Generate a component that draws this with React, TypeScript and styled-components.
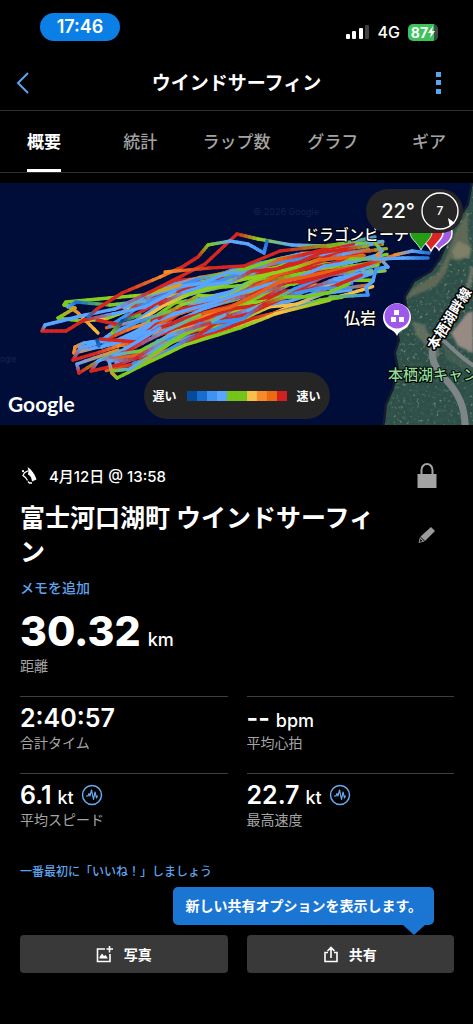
import React from "react";
import styled, { createGlobalStyle } from "styled-components";

const latin = `Inter, "Noto Sans CJK JP", sans-serif`;

const GlobalStyle = createGlobalStyle`
  *, *::before, *::after { box-sizing: border-box; }
  html, body { margin: 0; background: #000; }
  body { color: #fff; font-family: ${latin}; -webkit-font-smoothing: antialiased; }
  button { font: inherit; color: inherit; background: none; border: 0; padding: 0; cursor: pointer; }
  h1, h2, p, dl, dd, dt { margin: 0; }
  svg { display: block; flex: none; }
`;

const Page = styled.div`
  min-height: 100vh;
  background: #000;
`;

const StatusBar = styled.div`
  display: flex;
  justify-content: space-between;
  align-items: flex-start;
  height: 56px;
  padding: 13px 35px 0 40px;
`;

const Clock = styled.span`
  width: 80px;
  height: 28px;
  border-radius: 14px;
  background: #0a7fe6;
  font-size: 18px;
  font-weight: 600;
  line-height: 28px;
  text-align: center;
`;

const StatusIcons = styled.div`
  display: flex;
  align-items: center;
  gap: 8px;
  height: 18px;
  margin-top: 10px;
  font-size: 16px;
  font-weight: 500;
`;

const Battery = styled.span`
  display: flex;
  align-items: center;
  justify-content: center;
  width: 30px;
  height: 17px;
  border-radius: 5px;
  background: linear-gradient(90deg, #3cc35c 88%, #3c4a40 88%);
  font-size: 14px;
  font-weight: 700;
`;

const Header = styled.header`
  display: grid;
  grid-template-columns: 1fr auto 1fr;
  align-items: center;
  height: 55px;
  padding: 0 16px;
  border-bottom: 1px solid #303030;
`;

const HeaderTitle = styled.h1`
  padding-top: 2px;
  font-size: 19px;
  font-weight: 700;
  line-height: 28px;
`;

const IconButton = styled.button<{ $end?: boolean }>`
  display: flex;
  align-items: center;
  justify-content: center;
  justify-self: ${(p) => (p.$end ? "end" : "start")};
  width: 14px;
  height: 28px;
  margin-right: ${(p) => (p.$end ? 12 : 0)}px;
`;

const Tabs = styled.nav`
  overflow: hidden;
  border-bottom: 1px solid #303030;
`;

const TabList = styled.div`
  display: grid;
  grid-template-columns: repeat(5, 1fr);
  justify-items: center;
  margin: 0 -4px;
`;

const Tab = styled.button<{ $active?: boolean }>`
  height: 61px;
  border-bottom: 3px solid ${(p) => (p.$active ? "#fff" : "transparent")};
  color: ${(p) => (p.$active ? "#fff" : "#a3a3a3")};
  font-size: 17px;
  font-weight: ${(p) => (p.$active ? 700 : 500)};
  white-space: nowrap;
`;

const MapPanel = styled.section`
  position: relative;
  height: 242px;
  margin-top: 10px;
  overflow: hidden;
  background: #000d38;
`;

const MapDrawing = styled.svg`
  width: 100%;
  height: 100%;
`;

const Weather = styled.div`
  position: absolute;
  top: 6px;
  right: 10px;
  display: flex;
  align-items: center;
  gap: 5px;
  height: 44px;
  padding: 0 3px 0 15px;
  border-radius: 22px;
  background: #252525;
  font-size: 20px;
  font-weight: 500;
`;

const Legend = styled.div`
  position: absolute;
  left: 50%;
  bottom: 6px;
  transform: translateX(-50%);
  display: flex;
  align-items: center;
  gap: 10px;
  height: 47px;
  padding: 0 9px;
  border-radius: 24px;
  background: #252525;
  font-size: 12px;
  font-weight: 600;
  white-space: nowrap;
`;

const Scale = styled.div`
  display: flex;
`;

const Swatch = styled.span<{ $color: string }>`
  width: 10px;
  height: 10px;
  background: ${(p) => p.$color};
`;

const MapLogo = styled.span`
  position: absolute;
  left: 8px;
  bottom: 7px;
  font-family: Lato, sans-serif;
  font-size: 21px;
  font-weight: 700;
  line-height: 28px;
`;

const Details = styled.main`
  padding: 36px 19px 50px 20px;
`;

const MetaRow = styled.div`
  display: flex;
  align-items: center;
  justify-content: space-between;
  height: 28px;
  padding-right: 17px;
`;

const MetaDate = styled.div`
  display: flex;
  align-items: center;
  gap: 11px;
  font-size: 15px;
  font-weight: 500;
`;

const TitleRow = styled.div`
  display: flex;
  align-items: center;
  justify-content: space-between;
  margin-top: 12px;
  padding-right: 20px;
`;

const ActivityTitle = styled.h2`
  max-width: 360px;
  font-size: 25px;
  font-weight: 700;
  line-height: 34px;
  word-break: break-all;
`;

const TextLink = styled.a<{ $small?: boolean }>`
  display: block;
  width: max-content;
  color: #5fa3ec;
  font-size: ${(p) => (p.$small ? 12 : 14)}px;
  font-weight: 500;
  line-height: 20px;
  text-decoration: none;
`;

const Memo = styled.div`
  margin-top: 9px;
`;

const Primary = styled.dl`
  display: flex;
  flex-direction: column;
  margin-top: 8px;
  margin-bottom: 20px;
`;

const StatGrid = styled.dl`
  display: grid;
  grid-template-columns: 1fr 1fr;
  column-gap: 19px;
`;

const Stat = styled.div`
  display: flex;
  flex-direction: column;
  height: 77px;
  padding-top: 6px;
  border-top: 1px solid #3e3e3e;
`;

const Value = styled.dd<{ $large?: boolean }>`
  display: flex;
  align-items: baseline;
  gap: ${(p) => (p.$large ? 7 : 6)}px;
  height: ${(p) => (p.$large ? 50 : 30)}px;
  font-family: Inter, sans-serif;
  font-size: ${(p) => (p.$large ? 41 : 25)}px;
  font-weight: ${(p) => (p.$large ? 800 : 600)};
  line-height: ${(p) => (p.$large ? 50 : 30)}px;
`;

const Unit = styled.span`
  font-size: 18px;
  font-weight: 500;
  line-height: 20px;
`;

const PulseBox = styled.span`
  align-self: center;
  margin-left: 1px;
`;

const Label = styled.dt`
  order: 1;
  color: #a5a5a5;
  font-size: 14px;
  line-height: 20px;
`;

const LikeRow = styled.div`
  margin-top: 12px;
`;

const Actions = styled.div`
  position: relative;
  display: grid;
  grid-template-columns: 1fr 1fr;
  gap: 19px;
  margin-top: 53px;
`;

const ActionButton = styled.button`
  display: flex;
  align-items: center;
  justify-content: center;
  gap: 11px;
  height: 38px;
  border-radius: 4px;
  background: #393939;
  font-size: 14px;
  font-weight: 600;
`;

const Tooltip = styled.div`
  position: absolute;
  right: 20px;
  bottom: 48px;
  height: 38px;
  padding: 0 12px;
  border-radius: 5px;
  background: #1a76d2;
  font-size: 14px;
  font-weight: 600;
  line-height: 38px;
  white-space: nowrap;
  &::after {
    content: "";
    position: absolute;
    top: 100%;
    right: 9px;
    border: 11px solid transparent;
    border-top: 10px solid #1a76d2;
    border-bottom: 0;
  }
`;

/* ---------- speed track ---------- */

type Pt = [number, number];
type Seg = { a: Pt; b: Pt; c: string };
const speed = ["#0b4aa0", "#1b6fd0", "#3f92f5", "#5aa5ff", "#7ccb1c", "#8ecf20", "#f4c043", "#f58a2a", "#ea5f16", "#d5261f"];

const edge = (pts: Pt[], x: number) => {
  for (let i = 1; i < pts.length; i++) {
    if (x <= pts[i][0]) {
      const [ax, ay] = pts[i - 1];
      const [bx, by] = pts[i];
      return ay + ((by - ay) * (x - ax)) / (bx - ax);
    }
  }
  return pts[pts.length - 1][1];
};

const topEdge: Pt[] = [[40, 140], [64, 123], [120, 113], [165, 92], [200, 87], [240, 82], [290, 73], [340, 62], [390, 58]];
const bottomEdge: Pt[] = [[40, 160], [75, 190], [116, 190], [150, 178], [185, 161], [240, 144], [280, 128], [330, 117], [390, 104]];

const mix = (a: string, b: string, t: number) => {
  const n = (s: string, i: number) => parseInt(s.slice(i, i + 2), 16);
  return `rgb(${[1, 3, 5].map((i) => Math.round(n(a, i) + (n(b, i) - n(a, i)) * t)).join(",")})`;
};

const segments = (pts: Pt[], cols: number[]) => {
  const out: Seg[] = [];
  for (let i = 1; i < pts.length; i++) {
    const [ax, ay] = pts[i - 1];
    const [bx, by] = pts[i];
    for (let k = 0; k < 5; k++) {
      const p = k / 5;
      const q = (k + 1) / 5;
      out.push({
        a: [ax + (bx - ax) * p, ay + (by - ay) * p],
        b: [ax + (bx - ax) * q, ay + (by - ay) * q],
        c: mix(speed[cols[i - 1]], speed[cols[i]], p),
      });
    }
  }
  return out;
};

const buildPasses = () => {
  let seed = 4211;
  const rnd = () => {
    seed = (seed * 16807) % 2147483647;
    return seed / 2147483647;
  };
  const picks = [9, 9, 9, 9, 9, 9, 3, 3, 3, 2, 4, 5, 4, 7, 6, 8];
  const all: Seg[] = [];
  for (let i = 0; i < 46; i++) {
    const base = ((i * 19) % 46) / 45;
    const v0 = Math.min(1, base * 0.9 + 0.15);
    const v1 = Math.max(0, Math.min(1, base + (rnd() - 0.7) * 0.8));
    const start = 100 + rnd() * 60;
    const end = 350 + rnd() * 38 - Math.max(0, v1 - 0.7) * 50;
    const pts: Pt[] = [];
    const cols: number[] = [];
    let c = picks[Math.floor(rnd() * picks.length)];
    for (let j = 0; j <= 9; j++) {
      const t = j / 9;
      const x = start + (end - start) * t;
      const v = Math.min(1, Math.max(0, v0 + (v1 - v0) * t + (rnd() - 0.5) * 0.14));
      pts.push([x, edge(topEdge, x) * (1 - v) + edge(bottomEdge, x) * v]);
      if (rnd() < 0.4) c = picks[Math.floor(rnd() * picks.length)];
      cols.push(c);
    }
    all.push(...segments(pts, cols));
  }
  return all;
};

const outer = [
  ...segments([[120, 162], [98, 158], [84, 160], [75, 164], [74, 170], [94, 165], [118, 160], [150, 148]], [2, 3, 3, 7, 7, 3, 3, 3]),
  ...segments([[73, 177], [80, 165], [98, 160], [112, 150], [140, 138], [170, 128]], [9, 3, 3, 3, 2, 4]),
  ...segments([[73, 177], [94, 171], [118, 163], [137, 159], [100, 156]], [9, 9, 7, 9, 9]),
  ...segments([[118, 167], [77, 181], [79, 190], [100, 177], [125, 166], [160, 145]], [7, 3, 9, 4, 3, 3]),
  ...segments([[91, 188], [98, 178], [128, 168], [165, 148], [200, 132]], [9, 3, 9, 3, 4]),
  ...segments([[91, 188], [118, 182], [148, 170], [190, 148]], [9, 9, 3, 4]),
  ...segments([[109, 178], [135, 176], [160, 160]], [3, 9, 3]),
  ...segments([[109, 178], [112, 190], [117, 195], [145, 181], [185, 162], [240, 145], [275, 131], [330, 117]], [3, 7, 4, 4, 5, 4, 6, 4]),
  ...segments([[112, 188], [130, 186], [155, 170], [184, 152], [225, 132]], [4, 3, 4, 4, 3]),
  ...segments([[114, 172], [140, 168], [170, 152], [210, 140]], [3, 4, 3, 9]),
  ...segments([[104, 136], [81, 138], [58, 135], [75, 125], [64, 122], [66, 119], [120, 114], [145, 112], [180, 102]], [6, 4, 4, 7, 4, 4, 5, 5, 7]),
  ...segments([[66, 121], [78, 130], [98, 150]], [4, 7, 6]),
  ...segments([[68, 124], [76, 119], [110, 122], [145, 118]], [3, 1, 4, 3]),
  ...segments([[97, 137], [120, 142], [112, 150], [122, 138], [140, 132]], [9, 9, 4, 0, 4]),
  ...segments([[42, 148], [66, 148], [84, 137], [113, 131], [145, 124], [175, 108]], [9, 9, 9, 3, 3, 3]),
  ...segments([[97, 157], [99, 163]], [0, 1]),
  ...segments([[42, 148], [45, 142], [85, 132], [115, 126], [150, 109], [205, 81], [237, 51], [258, 56], [292, 62], [330, 63], [375, 54]], [9, 3, 3, 3, 9, 9, 9, 5, 3, 4, 2]),
  ...segments([[88, 134], [97, 126], [122, 110], [160, 94], [182, 84], [198, 74], [208, 62], [230, 58], [248, 61], [264, 70], [267, 58]], [1, 9, 9, 7, 9, 9, 4, 3, 3, 2, 1]),
  ...segments([[165, 89], [210, 85], [244, 83], [280, 68], [340, 61]], [7, 9, 9, 9, 4]),
  ...segments([[375, 60], [382, 68], [377, 72], [388, 84], [376, 86], [373, 98], [366, 104], [368, 112], [330, 114]], [4, 3, 7, 3, 2, 3, 3, 2, 4]),
  ...segments([[300, 100], [335, 90], [365, 82], [395, 72], [412, 68], [429, 70]], [9, 9, 9, 7, 3, 1]),
  ...segments([[350, 76], [380, 76], [403, 75], [428, 75]], [4, 3, 3, 1]),
];

const track = [...buildPasses(), ...outer];

const Track = () => (
  <g strokeWidth="3.4" strokeLinecap="round">
    {track.map((s, i) => (
      <line key={i} x1={s.a[0]} y1={s.a[1]} x2={s.b[0]} y2={s.b[1]} stroke={s.c} />
    ))}
  </g>
);

const shore = "M473 0 L469 22 L453 45 L447 62 L441 76 L432 89 L415 99 L406 114 L408 128 L398 142 L400 158 L396 170 L399 186 L394 206 L387 222 L385 242 L473 242 Z";

const MapView = () => (
  <MapDrawing viewBox="0 0 473 242" preserveAspectRatio="xMaxYMid slice" role="img" aria-label="ルートマップ">
    <defs>
      <filter id="trees" x="0" y="0" width="100%" height="100%">
        <feTurbulence type="fractalNoise" baseFrequency="0.2" numOctaves="3" seed="6" />
        <feColorMatrix values="0 0 0 0 0.03  0 0 0 0 0.09  0 0 0 0 0.08  5 0 0 0 -2.2" />
        <feComposite in2="SourceGraphic" operator="in" />
      </filter>
      <filter id="leaves" x="0" y="0" width="100%" height="100%">
        <feTurbulence type="fractalNoise" baseFrequency="0.3" numOctaves="2" seed="21" />
        <feColorMatrix values="0 0 0 0 0.42  0 0 0 0 0.55  0 0 0 0 0.47  0 4 0 0 -2.3" />
        <feComposite in2="SourceGraphic" operator="in" />
      </filter>
      <filter id="soft"><feGaussianBlur stdDeviation="1.2" /></filter>
      <clipPath id="land"><path d={shore} /></clipPath>
    </defs>
    <rect width="473" height="242" fill="#000d38" />
    <path d={shore} fill="#141a30" stroke="#141a30" strokeWidth="5" />
    <path d={shore} fill="#2f4f46" />
    <g clipPath="url(#land)">
      <path d={shore} fill="#fff" filter="url(#leaves)" opacity=".5" />
      <path d={shore} fill="#fff" filter="url(#trees)" opacity=".75" />
      <g filter="url(#soft)">
        <path d="M468 28 L455 50 L447 72 L438 90 L412 106 L406 116 L418 111 L436 103 L446 90 L450 76 L460 78 L471 70 L468 52Z" fill="#686d58" opacity=".85" />
        <path d="M458 58 L471 64 L470 74 L455 76 L452 68Z" fill="#85876b" opacity=".8" />
        <path d="M412 138 L425 142 L428 150 L436 156 L440 170 L434 180 L428 165 L416 152Z" fill="#6c7565" opacity=".8" />
        <path d="M442 160 L456 172 L473 182 L473 192 L446 176Z" fill="#4e6658" opacity=".6" />
        <path d="M473 84 L468 105 L458 122" stroke="#807f76" strokeWidth="4" fill="none" opacity=".8" />
        <path d="M473 128 L467 130 L458 142 L451 150 L458 163 L473 170Z" fill="#9c8d86" opacity=".95" />
      </g>
      <g fill="none" stroke="#7e8587">
        <path d="M433 166 C430 178 438 188 447 198 C460 212 465 226 465 242" strokeWidth="7" />
        <path d="M443 157 C453 166 462 176 476 184" strokeWidth="4" />
      </g>
    </g>
    <text x="253" y="32" fill="#14224c" fontSize="9" fontFamily="Inter">© 2026 Google</text>
    <text x="0" y="179" fill="#17274e" fontSize="8" fontFamily="Inter">ogle</text>
    <Track />
    <g stroke="#fff" strokeWidth="1.5">
      <path d="M439 67 C437 63 434 63 431 60 A13 13 0 1 1 447 60 C444 63 441 63 439 67Z" fill="#a35be5" />
      <path d="M431 68 C427 60 420 57 420 50 A11 11 0 0 1 443 50 C443 57 435 60 431 68Z" fill="#d92525" />
      <path d="M421 67 C417 59 410 56 410 49 A11 11 0 0 1 432 49 C432 56 425 59 421 67Z" fill="#259b16" strokeWidth="0.8" />
    </g>
    <g transform="translate(397 134)">
      <path d="M0 19 C-2 14 -6 13 -9 11 A14 14 0 1 1 9 11 C6 13 2 14 0 19Z" fill="#fff" />
      <circle r="12.5" cy="-1" fill="#9e59ec" />
      <path d="M-3 -7h5v5h-5z M-6 0h5v5h-5z M2 0h5v5H2z" fill="#fff" />
    </g>
    <g fontFamily="Noto Sans CJK JP" fontWeight="500" fontSize="15" stroke="#000" strokeWidth="2" paintOrder="stroke" strokeLinejoin="round">
      <text x="304" y="57" fill="#fff">ドラゴンビーチ</text>
      <text x="344" y="141" fill="#fff" fontSize="16">仏岩</text>
      <text x="388" y="197" fill="#8fdc9a">本栖湖キャン</text>
      <text transform="translate(435 168) rotate(-58)" fill="#fff" fontWeight="700" fontSize="14" strokeWidth="3">本栖湖畔線</text>
    </g>
  </MapDrawing>
);

/* ---------- icons ---------- */

const Signal = () => (
  <svg width="24" height="16" viewBox="0 0 24 16" fill="#fff">
    <rect x="0" y="10" width="4" height="5" rx="1" />
    <rect x="6" y="7" width="4" height="8" rx="1" />
    <rect x="13" y="4" width="4" height="11" rx="1" />
    <rect x="19" y="1" width="4" height="14" rx="1" fill="#404040" />
  </svg>
);

const Bolt = () => (
  <svg width="7" height="12" viewBox="0 0 7 12"><path d="M5 0 0 7h3L2 12 7 5H4Z" fill="#fff" /></svg>
);

const Back = () => (
  <svg width="14" height="22" viewBox="0 0 14 22" fill="none" stroke="#5ba5ef" strokeWidth="2"><path d="M12 1 2 11 12 21" /></svg>
);

const More = () => (
  <svg width="5" height="22" viewBox="0 0 5 22" fill="#5ba5ef"><path d="M0 0h5v5H0zM0 8h5v5H0zM0 17h5v5H0z" /></svg>
);

const Windsurf = () => (
  <svg width="18" height="18" viewBox="0 0 18 18">
    <path d="M7.5 1C11 3 15 8 16.5 13.5L12 15.5C11.5 11 10 9.500 8 8.500C8.500 6 8.500 3.500 7.500 1Z" fill="#fff" />
    <circle cx="3" cy="5.200" r="1.100" fill="#fff" />
    <path d="M8 4.800 4.500 6.800 3 9.500 5.500 11.500 7.500 14.500M8 15.500 9.500 17H12" fill="none" stroke="#fff" strokeWidth="1.300" />
  </svg>
);

const Lock = () => (
  <svg width="20" height="25" viewBox="0 0 20 25">
    <path d="M4.500 12V7a5.500 6 0 0 1 11 0v5" fill="none" stroke="#a3a3a3" strokeWidth="2" />
    <path d="M0.500 11h19v14H0.500z" fill="#a3a3a3" />
  </svg>
);

const Pencil = () => (
  <svg width="18" height="17" viewBox="0 0 18 17" fill="#9a9a9a">
    <path d="M13 0 17 4 7 14 2.500 9.500Z" />
    <path d="M2 10 6.500 14.500 0.500 16Z M2.500 12 1.700 14.800 4.500 14.200Z" fillRule="evenodd" />
  </svg>
);

const Pulse = () => (
  <svg width="22" height="22" viewBox="0 0 22 22" fill="none" stroke="#66aaf0" strokeLinejoin="round">
    <circle cx="11" cy="11" r="9.5" strokeWidth="1.5" />
    <path d="M5 12H7L8 9.5 9 12 10.5 6 12.5 15.5 14 8 15.5 14 16.5 11.5" strokeWidth="1.2" />
  </svg>
);

const Photo = () => (
  <svg width="17" height="17" viewBox="0 0 17 17" fill="none" stroke="#fff" strokeWidth="1.6">
    <path d="M9 3H1.5V15.5H14V8M13.5 0V6.5M10.5 3H17" />
    <path d="M3.5 12.5V11L6 7.5 8 10 9.5 9 12 12.5Z" fill="#fff" stroke="none" />
  </svg>
);

const Share = () => (
  <svg width="14" height="17" viewBox="0 0 14 17" fill="none" stroke="#fff" strokeWidth="1.6">
    <path d="M4 6.5H1V15.5H13V6.5H10M7 12V2M3.5 5 7 1.5 10.5 5" />
  </svg>
);

const WindDial = () => (
  <svg width="40" height="40" viewBox="0 0 40 40">
    <circle cx="20" cy="20" r="18" fill="none" stroke="#fff" strokeWidth="1.4" />
    <text x="20" y="24" fill="#fff" fontSize="12" fontFamily="Inter" textAnchor="middle">7</text>
    <path d="M28 27 35 32 29.500 34.500Z" fill="#fff" />
  </svg>
);

const tabs = ["概要", "統計", "ラップ数", "グラフ", "ギア"];
const legend = ["#064a9c", "#166fd0", "#3d93f4", "#5aa5ff", "#74c41a", "#74c41a", "#f7c04a", "#f78a2a", "#ec6b12", "#d02020"];
const stats = [
  { value: "2:40:57", label: "合計タイム" },
  { value: "--", unit: "bpm", label: "平均心拍" },
  { value: "6.1", unit: "kt", label: "平均スピード", pulse: true },
  { value: "22.7", unit: "kt", label: "最高速度", pulse: true },
];

export default function App() {
  return (
    <Page lang="ja">
      <GlobalStyle />
      <StatusBar>
        <Clock>17:46</Clock>
        <StatusIcons>
          <Signal />
          <span>4G</span>
          <Battery>87<Bolt /></Battery>
        </StatusIcons>
      </StatusBar>
      <Header>
        <IconButton aria-label="戻る"><Back /></IconButton>
        <HeaderTitle>ウインドサーフィン</HeaderTitle>
        <IconButton $end aria-label="メニュー"><More /></IconButton>
      </Header>
      <Tabs>
        <TabList>
          {tabs.map((t, i) => (
            <Tab key={t} $active={i === 0}>{t}</Tab>
          ))}
        </TabList>
      </Tabs>
      <MapPanel>
        <MapView />
        <MapLogo>Google</MapLogo>
        <Legend>
          <span>遅い</span>
          <Scale>{legend.map((c, i) => <Swatch key={i} $color={c} />)}</Scale>
          <span>速い</span>
        </Legend>
        <Weather>22°<WindDial /></Weather>
      </MapPanel>
      <Details>
        <MetaRow>
          <MetaDate><Windsurf />4月12日 @ 13:58</MetaDate>
          <Lock />
        </MetaRow>
        <TitleRow>
          <ActivityTitle>富士河口湖町 ウインドサーフィン</ActivityTitle>
          <IconButton aria-label="編集"><Pencil /></IconButton>
        </TitleRow>
        <Memo>
          <TextLink href="#memo">メモを追加</TextLink>
        </Memo>
        <Primary>
          <Label>距離</Label>
          <Value $large>30.32<Unit>km</Unit></Value>
        </Primary>
        <StatGrid>
          {stats.map((s) => (
            <Stat key={s.label}>
              <Label>{s.label}</Label>
              <Value>
                {s.value}
                {s.unit && <Unit>{s.unit}</Unit>}
                {s.pulse && <PulseBox><Pulse /></PulseBox>}
              </Value>
            </Stat>
          ))}
        </StatGrid>
        <LikeRow>
          <TextLink $small href="#like">一番最初に「いいね！」しましょう</TextLink>
        </LikeRow>
        <Actions>
          <ActionButton><Photo />写真</ActionButton>
          <ActionButton><Share />共有</ActionButton>
          <Tooltip role="tooltip">新しい共有オプションを表示します。</Tooltip>
        </Actions>
      </Details>
    </Page>
  );
}
